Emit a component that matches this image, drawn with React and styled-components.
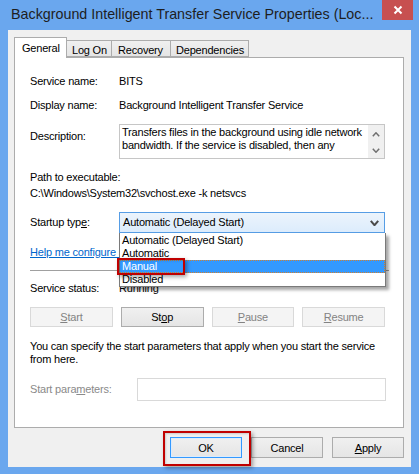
import React from "react";
import styled, { createGlobalStyle } from "styled-components";

const GlobalStyle = createGlobalStyle`
  html, body { margin: 0; padding: 0; }
  body {
    background: #6aa7ee;
    font-family: "Liberation Sans", Arial, sans-serif;
    font-size: 11px;
    letter-spacing: -0.2px;
    color: #000;
  }
  * { box-sizing: border-box; }
`;

const Window = styled.div`
  width: 419px;
  height: 474px;
  background: #6aa7ee;
  display: flex;
  flex-direction: column;
  overflow: hidden;
`;

const TitleBar = styled.div`
  position: relative;
  height: 30px;
  padding: 6px 0 0 11px;
  font-size: 14.3px;
  letter-spacing: 0;
  line-height: 16px;
  color: #1e1e1e;
  white-space: nowrap;
`;

const CloseButton = styled.div`
  position: absolute;
  top: 0;
  right: 6px;
  width: 31px;
  height: 20px;
  background: #c75050;
  display: flex;
  align-items: center;
  justify-content: center;
`;

const DialogBody = styled.div`
  margin: 0 8px;
  height: 437px;
  background: #f0f0f0;
  padding: 7px 7px 0 6px;
  display: flex;
  flex-direction: column;
`;

const TabStrip = styled.div`
  display: flex;
  align-items: flex-end;
  height: 20px;
`;

const Tab = styled.div`
  position: relative;
  height: ${(p) => (p.$active ? "21px" : "17px")};
  margin-bottom: ${(p) => (p.$active ? "-1px" : "0")};
  margin-left: ${(p) => (p.$first ? "0" : "-1px")};
  z-index: ${(p) => (p.$active ? 2 : 1)};
  width: ${(p) => p.$w}px;
  padding-left: ${(p) => p.$pl}px;
  padding-top: ${(p) => (p.$active ? "3px" : "2px")};
  border: 1px solid #acacac;
  border-bottom: ${(p) => (p.$active ? "none" : "1px solid #acacac")};
  background: ${(p) =>
    p.$active ? "#fff" : "linear-gradient(#f0f0f0, #e5e5e5)"};
  line-height: 14px;
  white-space: nowrap;
`;

const Panel = styled.div`
  height: 371px;
  background: #fff;
  border: 1px solid #acacac;
  padding: 16px 18px 0 15px;
  display: flex;
  flex-direction: column;
`;

const InfoRow = styled.div`
  display: grid;
  grid-template-columns: ${(p) => p.$label || 89}px 1fr;
  align-items: ${(p) => (p.$top ? "start" : "center")};
  margin-top: ${(p) => p.$mt || 0}px;
  line-height: 15px;
  position: relative;
`;

const Label = styled.div`
  padding-top: ${(p) => p.$pt || 0}px;
  color: ${(p) => (p.$disabled ? "#8a8a8a" : "#000")};
  white-space: nowrap;
`;

const Value = styled.div`
  white-space: nowrap;
`;

const Line = styled.div`
  margin-top: ${(p) => p.$mt || 0}px;
  line-height: 15px;
  white-space: nowrap;
`;

const DescBox = styled.div`
  height: 35px;
  border: 1px solid #c6c6c6;
  display: flex;
`;

const DescText = styled.div`
  flex: 1;
  padding: 1px 0 0 2px;
  line-height: 13px;
  white-space: nowrap;
  overflow: hidden;
`;

const ScrollTrack = styled.div`
  width: 16px;
  background: #f0f0f0;
  display: flex;
  flex-direction: column;
  align-items: center;
  justify-content: space-between;
  padding: 7px 0 5px;
`;

const Combo = styled.div`
  height: 21px;
  border: 1px solid #569de5;
  background: linear-gradient(#ecf4fc, #dcecfc);
  display: flex;
  align-items: center;
  justify-content: space-between;
  padding: 0 5px 0 3px;
  white-space: nowrap;
`;

const DropList = styled.div`
  position: absolute;
  left: 89px;
  top: 21px;
  width: 267px;
  padding-top: 1px;
  background: #fff;
  border: 1px solid #7a7a7a;
  border-top: none;
  box-shadow: 3px 3px 3px rgba(0, 0, 0, 0.35);
  z-index: 5;
`;

const DropItem = styled.div`
  position: relative;
  height: 13px;
  padding-left: 2px;
  white-space: nowrap;
  color: ${(p) => (p.$selected ? "#fff" : "#000")};
  background: ${(p) => (p.$selected ? "#3399ff" : "transparent")};
  border: 1px dotted ${(p) => (p.$selected ? "#d08030" : "transparent")};
  border-left: none;
  line-height: 11px;
`;

const RedBox = styled.div`
  position: absolute;
  left: ${(p) => p.$l}px;
  top: ${(p) => p.$t}px;
  width: ${(p) => p.$w}px;
  height: ${(p) => p.$h}px;
  border: 2px solid #c00000;
  box-shadow: 2px 2px 4px rgba(0, 0, 0, 0.35),
    inset 1px 1px 2px rgba(0, 0, 0, 0.15);
  pointer-events: none;
  z-index: 6;
`;

const HelpClip = styled.div`
  margin-top: 12px;
  width: 89px;
  overflow: hidden;
`;

const HelpLink = styled.a`
  display: block;
  line-height: 15px;
  color: #0066cc;
  text-decoration: underline;
  white-space: nowrap;
`;

const Separator = styled.div`
  margin-top: 10px;
  height: 1px;
  background: #a0a0a0;
  margin-right: -4px;
`;

const ButtonGrid = styled.div`
  display: grid;
  grid-template-columns: repeat(4, 1fr);
  gap: 8px;
  margin-top: 11px;
`;

const Button = styled.div`
  position: relative;
  height: ${(p) => p.$h || 20}px;
  width: ${(p) => (p.$w ? p.$w + "px" : "auto")};
  display: flex;
  align-items: center;
  justify-content: center;
  border: 1px solid
    ${(p) => (p.$disabled ? "#d9d9d9" : p.$default ? "#3399ff" : "#acacac")};
  background: ${(p) =>
    p.$disabled ? "#f4f4f4" : "linear-gradient(#f0f0f0, #e5e5e5)"};
  color: ${(p) => (p.$disabled ? "#838383" : "#000")};
  box-shadow: ${(p) => (p.$default ? "inset 0 0 0 1px #dcecfc" : "none")};
  white-space: nowrap;
`;

const U = styled.span`
  text-decoration: underline;
`;

const Paragraph = styled.div`
  margin-top: 13px;
  line-height: 13px;
  white-space: nowrap;
`;

const TextInput = styled.div`
  height: 23px;
  border: 1px solid #d9d9d9;
  background: #fff;
  margin-right: -1px;
`;

const DialogButtons = styled.div`
  display: flex;
  justify-content: flex-end;
  gap: 9px;
  margin-top: 9px;
`;

const Chevron = ({ up, w = 8, h = 5, color = "#505050", sw = 1.6 }) => (
  <svg width={w} height={h} viewBox={`0 0 ${w} ${h}`}>
    <polyline
      points={
        up
          ? `0.8,${h - 0.8} ${w / 2},0.8 ${w - 0.8},${h - 0.8}`
          : `0.8,0.8 ${w / 2},${h - 0.8} ${w - 0.8},0.8`
      }
      fill="none"
      stroke={color}
      strokeWidth={sw}
    />
  </svg>
);

export default function App() {
  return (
    <Window>
      <GlobalStyle />
      <TitleBar>
        Background Intelligent Transfer Service Properties (Loc...
        <CloseButton>
          <svg width="10" height="10" viewBox="0 0 10 10">
            <path d="M1.5 1.5 L8.5 8.5 M8.5 1.5 L1.5 8.5" stroke="#fff" strokeWidth="2" />
          </svg>
        </CloseButton>
      </TitleBar>
      <DialogBody>
        <TabStrip>
          <Tab $active $first $w={53} $pl={7}>General</Tab>
          <Tab $w={46} $pl={5}>Log On</Tab>
          <Tab $w={60} $pl={6}>Recovery</Tab>
          <Tab $w={79} $pl={5}>Dependencies</Tab>
        </TabStrip>
        <Panel>
          <InfoRow>
            <Label>Service name:</Label>
            <Value>BITS</Value>
          </InfoRow>
          <InfoRow $mt={9}>
            <Label>Display name:</Label>
            <Value>Background Intelligent Transfer Service</Value>
          </InfoRow>
          <InfoRow $mt={11} $top>
            <Label $pt={5}>Description:</Label>
            <DescBox>
              <DescText>
                Transfers files in the background using idle network
                <br />
                bandwidth. If the service is disabled, then any
              </DescText>
              <ScrollTrack>
                <Chevron up w={8} h={5} color="#707070" sw={1.5} />
                <Chevron w={8} h={5} color="#707070" sw={1.5} />
              </ScrollTrack>
            </DescBox>
          </InfoRow>
          <Line $mt={11}>Path to executable:</Line>
          <Line $mt={1}>C:\Windows\System32\svchost.exe -k netsvcs</Line>
          <InfoRow $mt={11}>
            <Label>
              Startup typ<U>e</U>:
            </Label>
            <Combo>
              <span>Automatic (Delayed Start)</span>
              <Chevron w={9} h={6} color="#4a4a4a" sw={2} />
            </Combo>
            <DropList>
              <DropItem>Automatic (Delayed Start)</DropItem>
              <DropItem>Automatic</DropItem>
              <DropItem $selected>
                Manual
                <RedBox $l={-3} $t={-3} $w={68} $h={17} />
              </DropItem>
              <DropItem>Disabled</DropItem>
            </DropList>
          </InfoRow>
          <HelpClip>
            <HelpLink>Help me configure service startup options.</HelpLink>
          </HelpClip>
          <Separator />
          <InfoRow $mt={10}>
            <Label>Service status:</Label>
            <Value>Running</Value>
          </InfoRow>
          <ButtonGrid>
            <Button $disabled>
              <U>S</U>tart
            </Button>
            <Button>
              St<U>o</U>p
            </Button>
            <Button $disabled>
              <U>P</U>ause
            </Button>
            <Button $disabled>
              <U>R</U>esume
            </Button>
          </ButtonGrid>
          <Paragraph>
            You can specify the start parameters that apply when you start the service
            <br />
            from here.
          </Paragraph>
          <InfoRow $mt={12} $label={107}>
            <Label $disabled>
              Start para<U>m</U>eters:
            </Label>
            <TextInput />
          </InfoRow>
        </Panel>
        <DialogButtons>
          <Button $default $w={72} $h={21}>
            OK
            <RedBox $l={-8} $t={-7} $w={88} $h={35} />
          </Button>
          <Button $w={72} $h={21}>
            Cancel
          </Button>
          <Button $w={72} $h={21}>
            <U>A</U>pply
          </Button>
        </DialogButtons>
      </DialogBody>
    </Window>
  );
}
